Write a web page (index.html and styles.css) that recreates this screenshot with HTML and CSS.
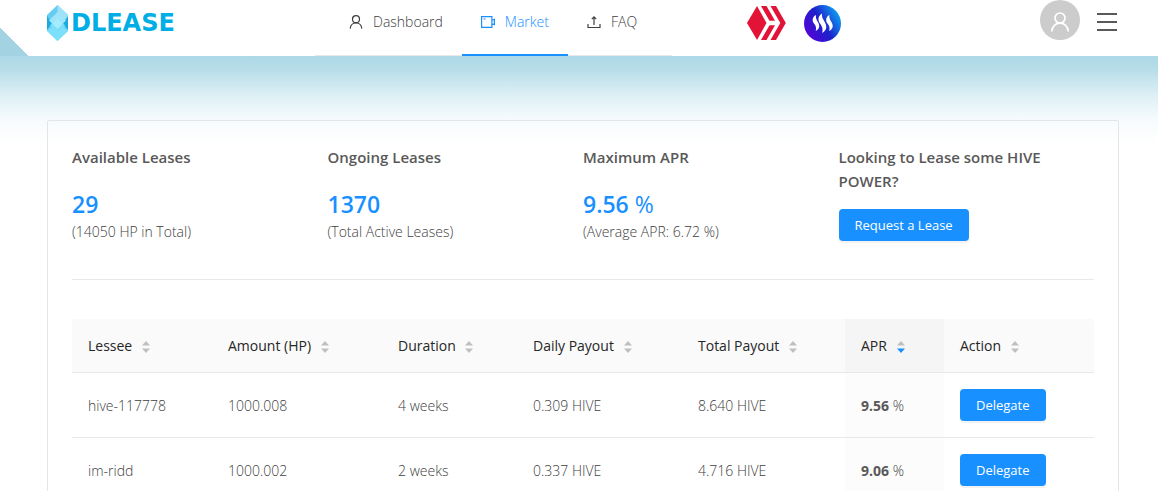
FILE: index.html
```html
<!DOCTYPE html>
<html lang="en">
<head>
    <meta charset="UTF-8">
    <meta name="viewport" content="width=device-width, initial-scale=1.0">
    <title>Dlease - Market</title>
    <link rel="stylesheet" href="styles.css">
</head>
<body>
    <!-- Shared icons -->
    <svg class="sprite" aria-hidden="true">
        <symbol id="icon-user" viewBox="0 0 14 14">
            <circle cx="7" cy="4.2" r="3.5" />
            <path d="M1.2 13.6C1.4 10 4 7.8 7 7.8s5.6 2.2 5.8 5.8" />
        </symbol>
        <symbol id="icon-sort" viewBox="0 0 8 14">
            <path d="M4 1 8 5.5H0z" />
            <path class="down" d="M4 13 0 8.5H8z" />
        </symbol>
    </svg>

    <header class="header">
        <a href="#" class="logo">
            <svg class="logo-mark" viewBox="0 0 21 36" aria-hidden="true">
                <path fill="#63cdf2" d="M10.5 0 21 10v16L10.5 36 0 26V10z" />
                <path fill="#9fe2f7" d="M10.5 0 21 10v8L10.5 8z" />
                <path fill="#19abe0" d="M0 11l5 7-5 7zM21 11l-5 7 5 7z" />
                <path fill="#9fe4f9" d="M10.5 7 19 15.5 10.5 24 2 15.5z" />
                <path fill="#7bdcf8" d="M10.5 13 18 20.5 10.5 28 3 20.5z" />
                <path fill="#a3ecfd" d="M10.5 13 16 18.5 10.5 24 5 18.5z" />
                <path fill="#7de0fb" d="M0 25.5 5 22l5.5 5 5.5-5 5 3.5L10.5 36z" />
            </svg>
            <span>DLEASE</span>
        </a>

        <nav class="menu">
            <a href="#" class="menu-item">
                <svg class="icon" viewBox="0 0 14 14"><use href="#icon-user" /></svg>
                Dashboard
            </a>
            <a href="#" class="menu-item active">
                <svg class="icon" viewBox="0 0 14 14">
                    <path d="M.6 1.6h10.3v10.8H.6zM2.5 4h2M10.9 5.2l2.5-.8v5.2l-2.5-.8" />
                </svg>
                Market
            </a>
            <a href="#" class="menu-item">
                <svg class="icon" viewBox="0 0 14 14">
                    <path d="M1 9v3.5h12V9M7 10V2M4.8 4.2 7 1.8l2.2 2.4" />
                </svg>
                FAQ
            </a>
        </nav>

        <div class="chains">
            <a href="#" aria-label="Hive">
                <svg width="40" height="34" viewBox="0 0 40 34">
                    <g fill="#e31337">
                        <path d="M10 0 19.5 17 10 34 0 17z" />
                        <path d="M14 0h5.5l8.5 14.8H22.5zM22.5 19.2H28L19.5 34H14z" />
                        <path d="M23.5 0H29l9.800 17L29 34h-5.500l9.800-17z" />
                    </g>
                </svg>
            </a>
            <a href="#" aria-label="Steem">
                <svg width="37" height="37" viewBox="0 0 37 37">
                    <defs>
                        <linearGradient id="steem" x1="0" y1=".8" x2="1" y2=".2">
                            <stop offset="0" stop-color="#5a00d8" />
                            <stop offset=".5" stop-color="#1d20cc" />
                            <stop offset="1" stop-color="#0bb0f5" />
                        </linearGradient>
                    </defs>
                    <circle cx="18.5" cy="18.5" r="18.5" fill="url(#steem)" />
                    <g fill="#fff">
                        <path d="M12 10C8 12 8 16 10 18.5c2 2.5 2.5 4.5 1.7 7.5 4-2 4.3-5 2.5-8.5-1.8-3.2-2.7-4.5-2.2-7.5z" />
                        <path d="M18 8.5c-4 2.5-4.5 6.5-2 10 2.3 3 3.2 5.5 2.2 9.5 4.5-2.5 5-6.5 2.8-10.5-2-3.5-3.5-5.500-3-9z" />
                        <path d="M25.5 10c-4 2-4 6-2 8.5 2 2.5 2.5 4.5 1.7 7.5 4-2 4.3-5 2.5-8.5-1.8-3.2-2.7-4.5-2.2-7.5z" />
                    </g>
                </svg>
            </a>
        </div>

        <div class="account">
            <a href="#" class="avatar" aria-label="Account">
                <svg class="icon" viewBox="0 0 14 14"><use href="#icon-user" /></svg>
            </a>
            <button type="button" class="burger" aria-label="Menu">
                <span></span>
                <span></span>
                <span></span>
            </button>
        </div>
    </header>

    <main class="content">
        <section class="card">
            <!-- Summary -->
            <div class="stats">
                <div class="stat">
                    <h4>Available Leases</h4>
                    <p class="value">29</p>
                    <p>(14050 HP in Total)</p>
                </div>
                <div class="stat">
                    <h4>Ongoing Leases</h4>
                    <p class="value">1370</p>
                    <p>(Total Active Leases)</p>
                </div>
                <div class="stat">
                    <h4>Maximum APR</h4>
                    <p class="value">9.56 <span>%</span></p>
                    <p>(Average APR: 6.72 %)</p>
                </div>
                <div class="stat">
                    <h4>Looking to Lease some HIVE POWER?</h4>
                    <button type="button" class="btn">Request a Lease</button>
                </div>
            </div>

            <!-- Leases -->
            <table class="leases">
                <colgroup>
                    <col class="col-lessee">
                    <col class="col-amount">
                    <col class="col-duration">
                    <col class="col-daily">
                    <col class="col-total">
                    <col class="col-apr">
                    <col class="col-action">
                </colgroup>
                <thead>
                    <tr>
                        <th>Lessee <svg class="sort"><use href="#icon-sort" /></svg></th>
                        <th>Amount (HP) <svg class="sort"><use href="#icon-sort" /></svg></th>
                        <th>Duration <svg class="sort"><use href="#icon-sort" /></svg></th>
                        <th>Daily Payout <svg class="sort"><use href="#icon-sort" /></svg></th>
                        <th>Total Payout <svg class="sort"><use href="#icon-sort" /></svg></th>
                        <th class="sorted">APR <svg class="sort"><use href="#icon-sort" /></svg></th>
                        <th>Action <svg class="sort"><use href="#icon-sort" /></svg></th>
                    </tr>
                </thead>
                <tbody>
                    <tr>
                        <td>hive-117778</td>
                        <td>1000.008</td>
                        <td>4 weeks</td>
                        <td>0.309 HIVE</td>
                        <td>8.640 HIVE</td>
                        <td class="sorted"><strong>9.56</strong> %</td>
                        <td class="action"><button type="button" class="btn">Delegate</button></td>
                    </tr>
                    <tr>
                        <td>im-ridd</td>
                        <td>1000.002</td>
                        <td>2 weeks</td>
                        <td>0.337 HIVE</td>
                        <td>4.716 HIVE</td>
                        <td class="sorted"><strong>9.06</strong> %</td>
                        <td class="action"><button type="button" class="btn">Delegate</button></td>
                    </tr>
                </tbody>
            </table>
        </section>
    </main>
</body>
</html>
```
FILE: styles.css
```css
* { box-sizing: border-box; }
html { overflow: hidden; }
body { margin: 0; font-family: "Open Sans", "Noto Sans", sans-serif; font-size: 14px; font-weight: 300; line-height: 22px; color: #404040; background: #fff; }
a { color: inherit; text-decoration: none; }
h4, p { margin: 0; }
.sprite { position: absolute; width: 0; height: 0; }
.icon { width: 14px; height: 14px; fill: none; stroke: currentColor; stroke-width: 1.2; }

/* Header */
.header { display: grid; grid-template-columns: 268px 357px 1fr auto; height: 56px; padding: 0 39px 0 47px; background: linear-gradient(45deg, #a3d3e2 20px, #fff 20px); }
.logo { display: flex; align-items: center; gap: 3px; height: 46px; font-family: "DejaVu Sans", sans-serif; font-size: 24px; font-weight: bold; color: #00aee6; }
.logo-mark { width: 21px; height: 36px; }
.menu { display: flex; height: 56px; padding: 0 15px; border-bottom: 1px solid #e8e8e8; }
.menu-item { display: flex; align-items: center; gap: 10px; height: 56px; padding: 0 19px 10px; border-bottom: 2px solid transparent; }
.menu-item.active { color: #1890ff; border-color: #1890ff; }
.chains { display: flex; align-items: center; gap: 17px; height: 46px; padding-left: 75px; }
.chains a { display: flex; }
.account { display: flex; align-items: flex-start; gap: 17px; }
.avatar { display: flex; align-items: center; justify-content: center; width: 40px; height: 40px; padding-top: 4px; border-radius: 50%; background: #ccc; color: #fff; }
.avatar .icon { width: 20px; height: 20px; }
.burger { display: flex; flex-direction: column; gap: 6px; width: 22px; margin-top: 13px; padding: 0; border: 0; background: none; }
.burger span { width: 20px; height: 2px; background: #595959; }

/* Content */
.content { padding: 64px 39px 0 47px; background: linear-gradient(#add8e6, #b5dce8 12px, #def0f5 40px, #f7fbfd 64px, #fff 88px); }
.card { padding: 24px; border: 1px solid #e2e6e8; border-radius: 2px; }
.stats { display: grid; grid-template-columns: repeat(4, 1fr); padding-bottom: 36px; border-bottom: 1px solid #e8e8e8; }
.stat h4 { margin-bottom: 16px; font-size: 15px; font-weight: 600; line-height: 24px; color: #595959; }
.stat .value { margin: 20px 0 2px; font-size: 23px; font-weight: 600; line-height: 30px; color: #1890ff; }
.stat .value span { font-weight: 400; }
.btn { height: 32px; padding: 0 16px; border: 0; border-radius: 4px; background: #1890ff; box-shadow: 0 2px 0 rgba(0, 0, 0, 0.05); color: #fff; font: inherit; font-size: 13px; font-weight: 400; cursor: pointer; }

/* Leases */
.leases { width: 100%; margin-top: 39px; border-collapse: separate; border-spacing: 0; table-layout: fixed; }
.leases th, .leases td { height: 65px; padding: 0 16px; border-bottom: 1px solid #e8e8e8; text-align: left; white-space: nowrap; }
.leases th { height: 54px; background: #fafafa; font-weight: 500; color: #262626; }
.leases th:first-child { border-top-left-radius: 4px; }
.leases th:last-child { border-top-right-radius: 4px; }
.leases td { padding-top: 2px; }
.leases td.action { padding-top: 0; }
.leases th.sorted { background: #f5f5f5; }
.leases td.sorted { background: #fcfcfc; }
.leases strong { font-weight: 700; color: #595959; }
.col-lessee { width: 140px; }
.col-amount { width: 170px; }
.col-duration { width: 135px; }
.col-daily { width: 165px; }
.col-total { width: 163px; }
.col-apr { width: 99px; }
.col-action { width: 150px; }
.sort { width: 8px; height: 14px; margin-left: 6px; vertical-align: middle; color: #bfbfbf; fill: #bfbfbf; }
.sorted .sort { color: #1890ff; }
.down { fill: currentColor; }
```
